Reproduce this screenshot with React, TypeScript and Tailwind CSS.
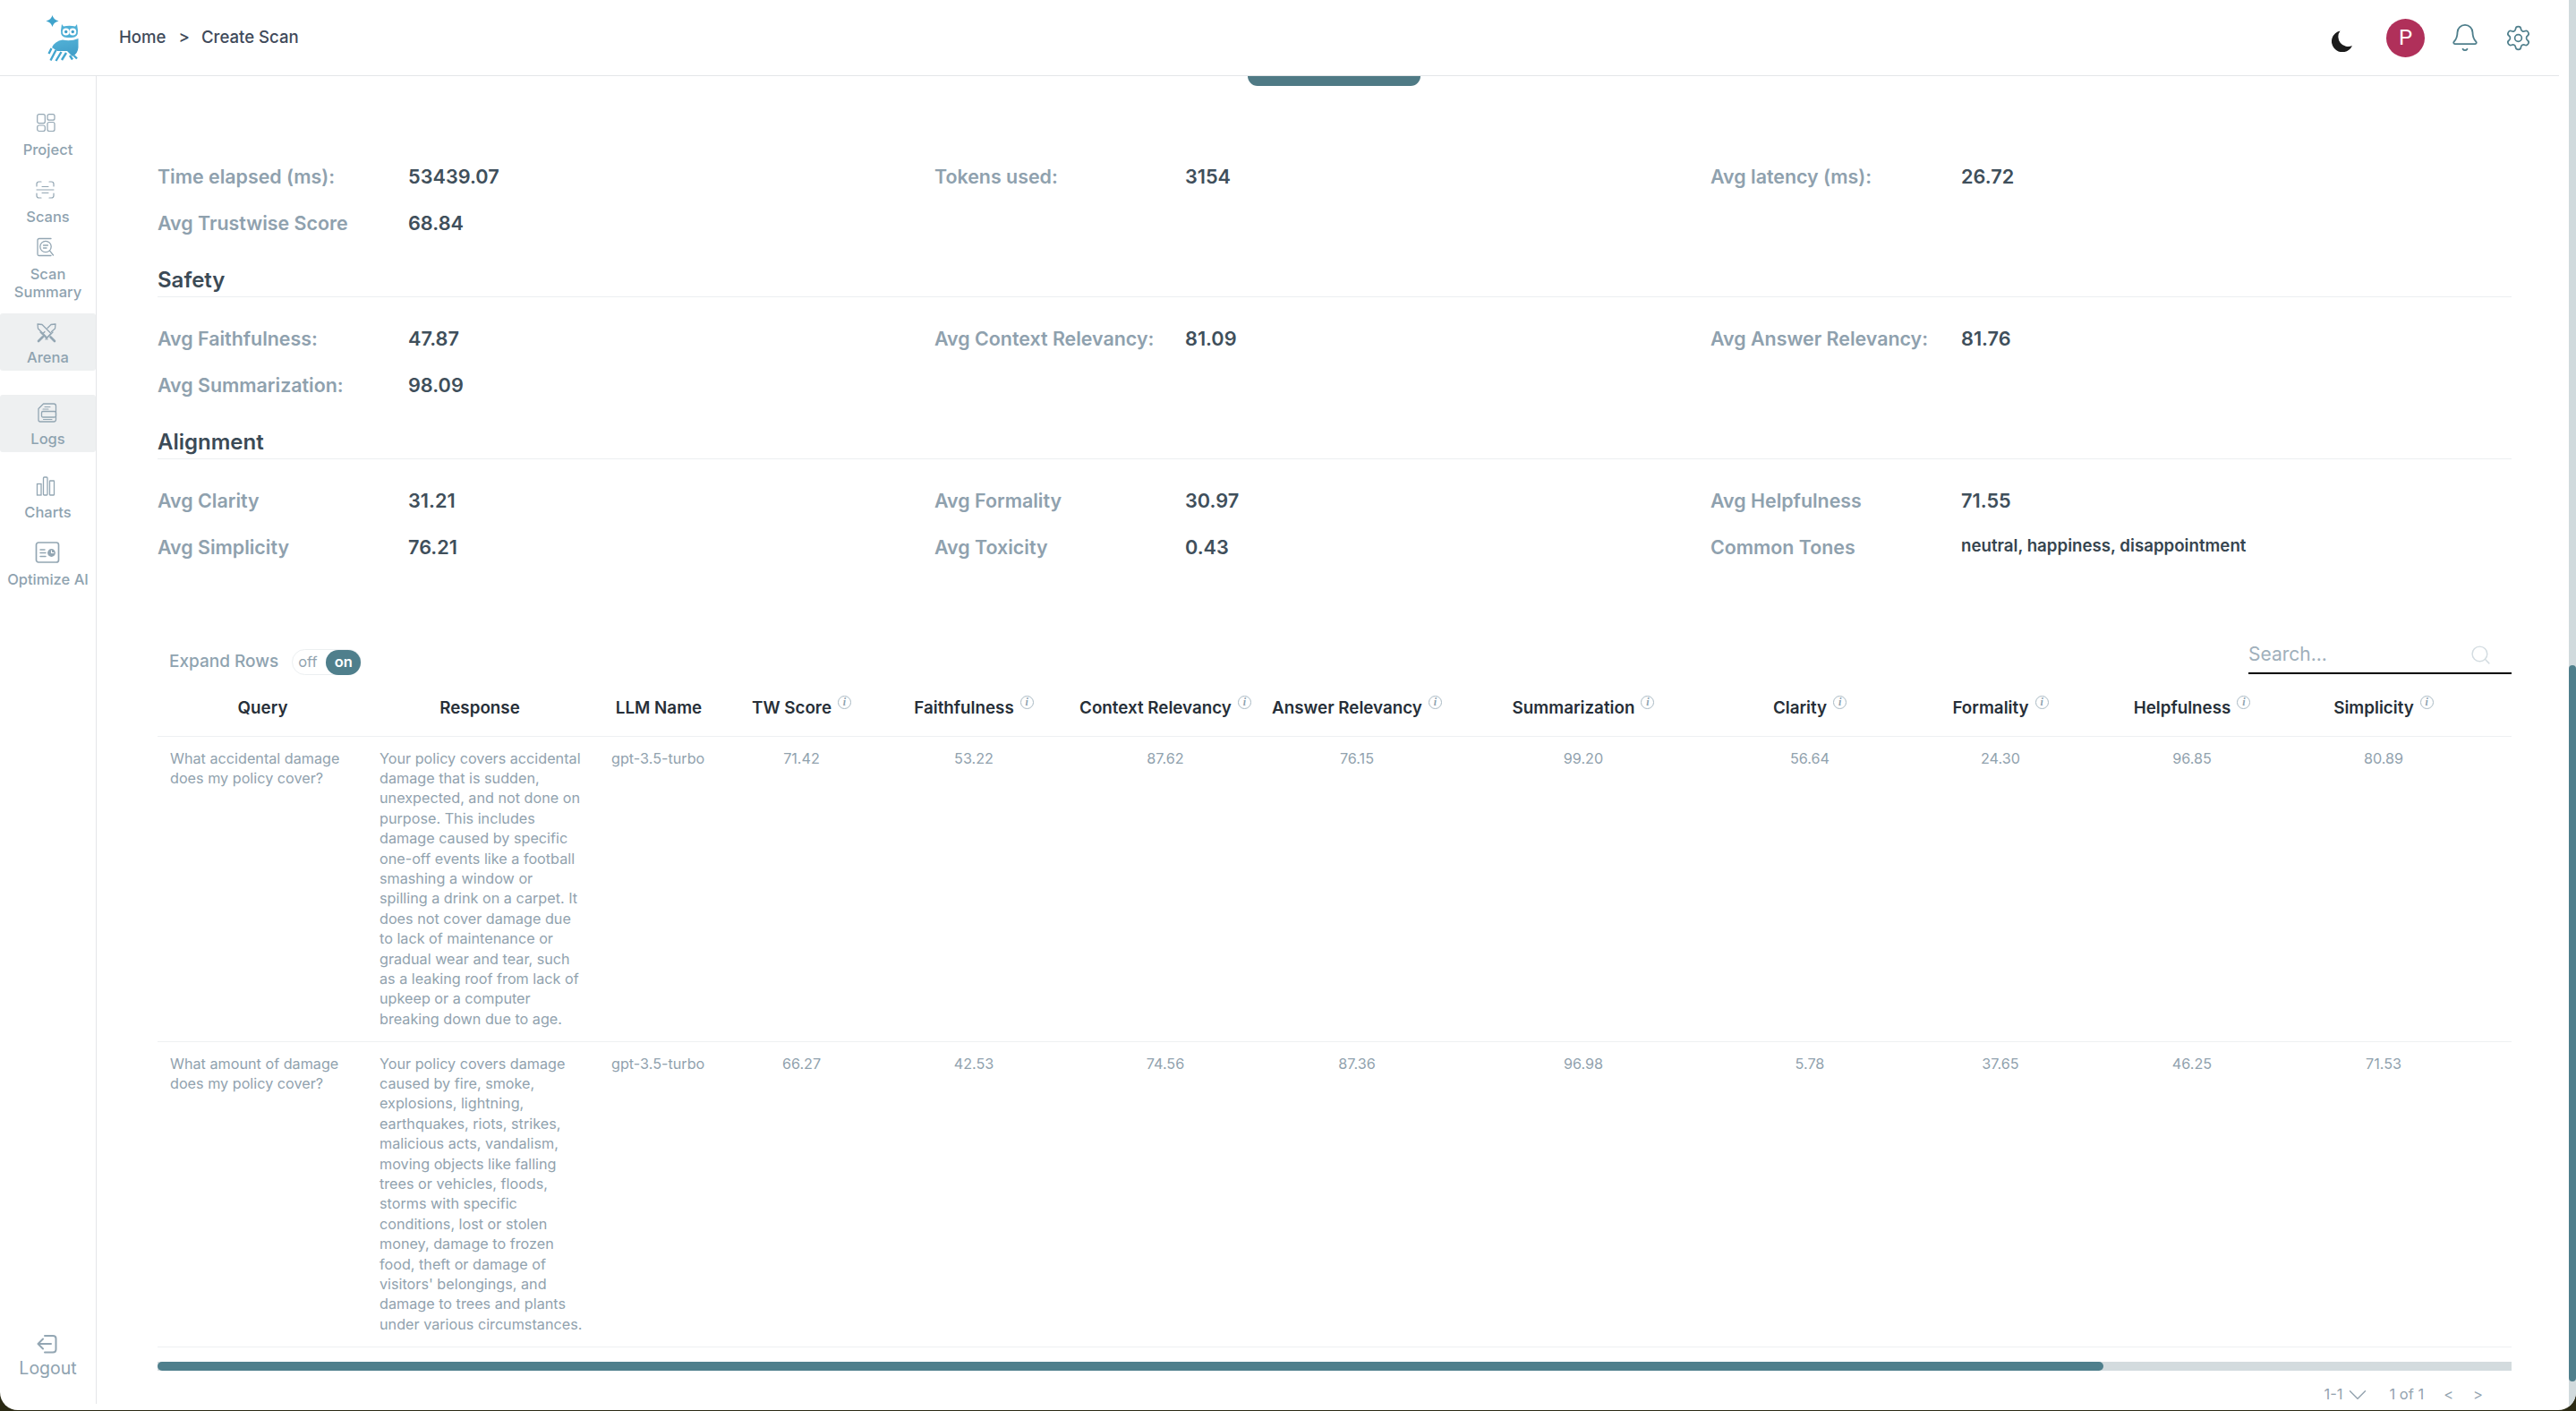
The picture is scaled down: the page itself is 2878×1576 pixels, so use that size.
import React from "react";
import { Bell, Settings, Search, ChevronDown } from "lucide-react";

const stroke = "#93a6b3";

function ProjectIcon() {
  return (
    <svg width="26" height="22" viewBox="0 0 26 22" fill="none" stroke={stroke} strokeWidth="1.2" className="-ml-[6px]">
      <rect x="3.7" y="1.7" width="8.6" height="10" rx="2" />
      <rect x="15" y="1.7" width="8" height="6.5" rx="2" />
      <rect x="3.7" y="14" width="8.6" height="6.5" rx="2" />
      <rect x="15" y="10.5" width="8" height="10" rx="2" />
    </svg>
  );
}
function ScansIcon() {
  return (
    <svg width="26" height="22" viewBox="0 0 26 22" fill="none" stroke={stroke} strokeWidth="1.2" strokeLinecap="round" className="-ml-[8px]">
      <path d="M4 7 V4.5 Q4 2 6.5 2 H9 M18 2 H20.5 Q23 2 23 4.5 V7 M4 15 V17.5 Q4 20 6.5 20 H9 M18 20 H20.5 Q23 20 23 17.5 V15" />
      <path d="M10 7.5 H17 M4 11 H23 M10 14.5 H17" strokeWidth="1" />
    </svg>
  );
}
function SummaryIcon() {
  return (
    <svg width="26" height="22" viewBox="0 0 26 22" fill="none" stroke={stroke} strokeWidth="1.3" strokeLinecap="round" className="-ml-[8px]">
      <path d="M20 1.5 H7 Q5 1.5 5 3.5 V19 Q5 20.5 6.5 20.5 H20" />
      <circle cx="14" cy="10.5" r="6.2" />
      <path d="M18.6 15.2 L22.5 20 M11.5 9 H16.5 M11.5 12 H15" />
    </svg>
  );
}
function ArenaIcon() {
  return (
    <svg width="24" height="24" viewBox="0 0 24 24" fill="none" stroke={stroke} strokeWidth="1.3" strokeLinecap="round" strokeLinejoin="round" className="-ml-[3px]">
      <path d="M2 2 L7 2.5 L17 12.5 L12.5 17 L2.5 7 Z" />
      <path d="M22 2 L17 2.5 L13 6.5 M22 2 L21.5 7 L17.5 10.5" />
      <path d="M10 10.5 L7.5 13 M9.5 15 L7 17.5" />
      <path d="M5 11 L13 19 M19 11 L11 19" />
      <path d="M16.5 16.5 L21 21 M7.5 16.5 L3 21" strokeWidth="2.6" />
    </svg>
  );
}
function LogsIcon() {
  return (
    <svg width="26" height="24" viewBox="0 0 26 24" fill="none" stroke={stroke} strokeWidth="1.3" strokeLinecap="round" strokeLinejoin="round" className="-ml-[4px]">
      <path d="M4 20 V7.5 L9.5 2 H21 Q23.5 2 23.5 4.5 V19.5 Q23.5 22 21 22 H6 Q4 22 4 20 Z" />
      <rect x="7.5" y="10.5" width="16" height="6.5" rx="1.5" />
      <path d="M11 5.5 H17 M9 8 H15 M9.5 19.5 H19" strokeWidth="1.1" />
    </svg>
  );
}
function ChartsIcon() {
  return (
    <svg width="26" height="22" viewBox="0 0 26 22" fill="none" stroke={stroke} strokeWidth="1.3" className="-ml-[5px]">
      <rect x="3.5" y="8.5" width="4.5" height="12.5" />
      <rect x="10.5" y="1" width="4.5" height="20" rx="1" />
      <rect x="17.5" y="5" width="5" height="16" rx="0.5" />
    </svg>
  );
}
function OptimizeIcon() {
  return (
    <svg width="28" height="24" viewBox="0 0 28 24" fill="none" stroke={stroke} strokeWidth="1.7" strokeLinecap="round" className="-ml-[1px]">
      <rect x="1.5" y="1" width="25" height="22" rx="2.5" />
      <path d="M6 9 H11 M6 12.5 H12 M6 16.5 H12" strokeWidth="1.5" />
      <circle cx="18.5" cy="12.5" r="4.4" fill={stroke} stroke="none" />
      <path d="M18.5 10 V12.5 H21" stroke="#ffffff" strokeWidth="1.1" />
    </svg>
  );
}
function LogoutIcon() {
  return (
    <svg width="24" height="22" viewBox="0 0 24 22" fill="none" stroke={stroke} strokeWidth="2" strokeLinecap="round" strokeLinejoin="round" className="-ml-[2px]">
      <path d="M9 2 H18 Q21.5 2 21.5 5 V17 Q21.5 20.5 18 20.5 H9" />
      <path d="M16 11 H2 M7 5.5 L1.5 11 L7 16.5" />
    </svg>
  );
}
function Logo() {
  return (
    <svg width="60" height="64" viewBox="0 0 60 64" className="ml-[40px]">
      <defs>
        <linearGradient id="owl" x1="0" y1="0" x2="0.3" y2="1">
          <stop offset="0" stopColor="#54b3d8" />
          <stop offset="1" stopColor="#429fc9" />
        </linearGradient>
      </defs>
      <path d="M18.5 7 Q19.8 12.2 25.5 13.5 Q19.8 14.8 18.5 20 Q17.2 14.8 11.5 13.5 Q17.2 12.2 18.5 7 Z" fill="#3fa3cc" />
      <path d="M29 17 L31 19.5 Q37.5 18 44 19.5 L46 17 L47 24 Q47.5 32 40 32 H35 Q27.5 32 28 24 Z" fill="#4fb0d6" />
      <circle cx="33.7" cy="25.5" r="3.9" fill="#ffffff" />
      <circle cx="41.3" cy="25.5" r="3.9" fill="#ffffff" />
      <circle cx="33.7" cy="25.5" r="1.7" fill="#3f9fc9" />
      <circle cx="41.3" cy="25.5" r="1.7" fill="#3f9fc9" />
      <path d="M30 34.5 Q39 36.5 47.5 33 V43 Q47 50 41 53 L35 47 H24 L18 43 Q21 36 30 34.5 Z" fill="url(#owl)" />
      <path d="M17.5 44 L14.5 50 M22.5 46 L16.5 57.5 M28.5 48 L22.5 58 M34 49 L29 57 M38 52 L41 56.5 M42.5 52 L46 55.5" stroke="#43a6cf" strokeWidth="2.4" fill="none" />
    </svg>
  );
}
function Moon() {
  return (
    <svg width="24" height="24" viewBox="0 0 24 24">
      <path d="M9.5 0.5 A12 12 0 1 0 23 17 A11 11 0 0 1 9.5 0.5 Z" fill="#1b1b1b" />
    </svg>
  );
}
function Info() {
  return (
    <span className="relative -top-[7px] ml-[7px] inline-flex h-[15px] w-[15px] shrink-0 items-center justify-center rounded-full border border-[#a9b9c3] text-[12px] leading-none text-[#8fa3b0] italic [font-family:'Liberation_Serif',serif]">
      i
    </span>
  );
}

const navCls = "flex flex-col items-center text-[16.5px] font-medium text-[#8fa3b0]";

type Pair = [string, string];

function StatRow({ items, last }: { items: Pair[]; last?: boolean }) {
  return (
    <div className="grid h-[52px] grid-cols-[868px_867px_1fr] items-center">
      {items.map(([k, v], i) => (
        <div key={k} className="flex items-center">
          <div className="w-[280px] shrink-0 text-[21.4px] font-semibold text-[#8fa1ae]">{k}</div>
          <div className={last && i === 2 ? "-mt-[2px] text-[18.7px] font-semibold text-[#36454f]" : "text-[21.7px] font-semibold text-[#3f4f5b]"}>{v}</div>
        </div>
      ))}
    </div>
  );
}

function Heading({ children }: { children: React.ReactNode }) {
  return (
    <div className="mb-[20px] flex h-[57px] items-end border-b border-[#eceff1] pb-[3px] text-[24px] leading-[30px] font-semibold text-[#3b4a56]">
      {children}
    </div>
  );
}

const cols = [
  { name: "Query", w: 235 },
  { name: "Response", w: 250 },
  { name: "LLM Name", w: 150 },
  { name: "TW Score", w: 169, info: true },
  { name: "Faithfulness", w: 216, info: true },
  { name: "Context Relevancy", w: 212, info: true },
  { name: "Answer Relevancy", w: 216, info: true },
  { name: "Summarization", w: 290, info: true },
  { name: "Clarity", w: 216, info: true },
  { name: "Formality", w: 210, info: true },
  { name: "Helpfulness", w: 218, info: true },
  { name: "Simplicity", w: 210, info: true },
];

const rows = [
  {
    q: ["What accidental damage", "does my policy cover?"],
    r: [
      "Your policy covers accidental",
      "damage that is sudden,",
      "unexpected, and not done on",
      "purpose. This includes",
      "damage caused by specific",
      "one-off events like a football",
      "smashing a window or",
      "spilling a drink on a carpet. It",
      "does not cover damage due",
      "to lack of maintenance or",
      "gradual wear and tear, such",
      "as a leaking roof from lack of",
      "upkeep or a computer",
      "breaking down due to age.",
    ],
    nums: ["71.42", "53.22", "87.62", "76.15", "99.20", "56.64", "24.30", "96.85", "80.89"],
  },
  {
    q: ["What amount of damage", "does my policy cover?"],
    r: [
      "Your policy covers damage",
      "caused by fire, smoke,",
      "explosions, lightning,",
      "earthquakes, riots, strikes,",
      "malicious acts, vandalism,",
      "moving objects like falling",
      "trees or vehicles, floods,",
      "storms with specific",
      "conditions, lost or stolen",
      "money, damage to frozen",
      "food, theft or damage of",
      "visitors' belongings, and",
      "damage to trees and plants",
      "under various circumstances.",
    ],
    nums: ["66.27", "42.53", "74.56", "87.36", "96.98", "5.78", "37.65", "46.25", "71.53"],
  },
];

export default function App() {
  return (
    <div className="h-[1576px] w-full overflow-hidden bg-[#2b2a14] [font-family:Inter,sans-serif]">
      <div className="flex h-[1575px] overflow-hidden rounded-b-[20px] bg-white">
        <div className="flex min-w-0 flex-1 flex-col">
          <header className="mr-[11px] flex h-[85px] shrink-0 items-center border-b border-[#e4e6e8]">
            <Logo />
            <div className="-mt-[1px] ml-[33px] flex items-center text-[18.6px] font-medium text-[#3f4a5a]">
              <span>Home</span>
              <span className="ml-[14px]">&gt;</span>
              <span className="ml-[13px]">Create Scan</span>
            </div>
            <div className="ml-auto flex items-center">
              <div className="mt-[7px]"><Moon /></div>
              <div className="ml-[37px] flex h-[43px] w-[43px] items-center justify-center rounded-full bg-[#b0305a] text-[24px] text-white [font-family:Roboto,sans-serif]">P</div>
              <Bell size={34} strokeWidth={1.3} color="#4f7f8c" className="ml-[28px]" />
              <Settings size={31} strokeWidth={1.3} color="#4f7f8c" className="mr-[30px] ml-[27px]" />
            </div>
          </header>
          <div className="flex min-h-0 flex-1">
            <aside className="mb-[7px] flex w-[108px] shrink-0 flex-col border-r border-[#e4e6e8]">
              <div className={`${navCls} mt-[41px] gap-[8px]`}><ProjectIcon /><span className="leading-[22px]">Project</span></div>
              <div className={`${navCls} mt-[23px] gap-[8px]`}><ScansIcon /><span className="leading-[22px]">Scans</span></div>
              <div className={`${navCls} mt-[12px] gap-[9px]`}><SummaryIcon /><span className="text-center leading-[20px]">Scan<br />Summary</span></div>
              <div className={`${navCls} mt-[14px] h-[64px] gap-[4px] rounded-[3px] bg-[#eef0f1] pt-[10px]`}><ArenaIcon /><span className="leading-[22px]">Arena</span></div>
              <div className={`${navCls} mt-[27px] h-[64px] gap-[6px] rounded-[3px] bg-[#eef0f1] pt-[8px]`}><LogsIcon /><span className="leading-[22px]">Logs</span></div>
              <div className={`${navCls} mt-[27px] gap-[7px]`}><ChartsIcon /><span className="leading-[22px]">Charts</span></div>
              <div className={`${navCls} mt-[22px] gap-[7px]`}><OptimizeIcon /><span className="leading-[22px]">Optimize AI</span></div>
              <div className={`${navCls} mt-auto gap-[5px] pb-[29px] !text-[19.5px] !font-normal`}><LogoutIcon /><span className="leading-[22px]">Logout</span></div>
            </aside>
            <main className="min-w-0 flex-1 overflow-hidden pr-[64px] pl-[68px]">
              <div className="ml-[1218px] h-[11px] w-[193px] rounded-b-[12px] bg-[#4f7a85]" />
              <div className="mt-[75px]">
                <StatRow items={[["Time elapsed (ms):", "53439.07"], ["Tokens used:", "3154"], ["Avg latency (ms):", "26.72"]]} />
                <StatRow items={[["Avg Trustwise Score", "68.84"]]} />
              </div>
              <Heading>Safety</Heading>
              <StatRow items={[["Avg Faithfulness:", "47.87"], ["Avg Context Relevancy:", "81.09"], ["Avg Answer Relevancy:", "81.76"]]} />
              <StatRow items={[["Avg Summarization:", "98.09"]]} />
              <Heading>Alignment</Heading>
              <StatRow items={[["Avg Clarity", "31.21"], ["Avg Formality", "30.97"], ["Avg Helpfulness", "71.55"]]} />
              <StatRow last items={[["Avg Simplicity", "76.21"], ["Avg Toxicity", "0.43"], ["Common Tones", "neutral, happiness, disappointment"]]} />

              <div className="mt-[74px] flex h-[43px] items-end justify-between">
                <div className="ml-[13px] flex items-center">
                  <span className="text-[19px] font-medium text-[#8fa3b0]">Expand Rows</span>
                  <div className="ml-[15px] flex h-[29px] w-[78px] items-center justify-between rounded-full border border-[#eceff1] text-[16.5px]">
                    <span className="ml-[6px] text-[#93a4b0]">off</span>
                    <span className="flex h-[28px] w-[39px] items-center justify-center rounded-full bg-[#4f7f8c] font-semibold text-white">on</span>
                  </div>
                </div>
                <div className="mb-[1px] flex h-[42px] w-[294px] items-center justify-between border-b-2 border-black">
                  <span className="text-[21px] text-[#a0b0bb]">Search...</span>
                  <Search size={25} strokeWidth={1.4} color="#d3dce1" className="mr-[22px]" />
                </div>
              </div>

              <div className="overflow-hidden">
                <table className="w-[2630px] table-fixed border-collapse">
                  <colgroup>
                    {cols.map((c) => <col key={c.name} style={{ width: c.w }} />)}
                    <col style={{ width: 38 }} />
                  </colgroup>
                  <thead>
                    <tr className="h-[68px] border-b border-[#eef0f2]">
                      {cols.map((c) => (
                        <th key={c.name} className="p-0 pt-[7px] text-center text-[18.8px] font-semibold whitespace-nowrap text-[#272f38]">
                          <span className="inline-flex items-center justify-center">{c.name}{c.info ? <Info /> : null}</span>
                        </th>
                      ))}
                      <th className="p-0" />
                    </tr>
                  </thead>
                  <tbody>
                    {rows.map((r) => (
                      <tr key={r.q[0]} className="h-[341px] border-b border-[#eef0f2] align-top text-[16.2px] leading-[22.4px] text-[#91a2ae]">
                        <td className="py-[13px] pr-[10px] pl-[14px] whitespace-nowrap">
                          {r.q.map((l) => <div key={l}>{l}</div>)}
                        </td>
                        <td className="py-[13px] pr-[4px] pl-[13px] whitespace-nowrap">
                          {r.r.map((l) => <div key={l}>{l}</div>)}
                        </td>
                        <td className="py-[13px] pl-[22px]">gpt-3.5-turbo</td>
                        {r.nums.map((n, i) => (
                          <td key={i} className="py-[13px] text-center">{n}</td>
                        ))}
                        <td />
                      </tr>
                    ))}
                  </tbody>
                </table>
              </div>

              <div className="mt-[16px] h-[10px] bg-[#d3dbde]">
                <div className="h-full w-[2174px] rounded-[5px] bg-[#4f7f8c]" />
              </div>

              <div className="mt-[15px] flex h-[24px] items-center justify-end text-[16.5px] text-[#94a3af]">
                <span>1-1</span>
                <ChevronDown size={34} strokeWidth={1} color="#94a3af" className="-my-[5px]" />
                <span className="ml-[18px]">1 of 1</span>
                <span className="ml-[22px]">&lt;</span>
                <span className="mr-[32px] ml-[22px]">&gt;</span>
              </div>
            </main>
          </div>
        </div>
        <div className="flex h-full w-[8px] shrink-0 flex-col bg-[#d1dadd]">
          <div className="mt-[743px] h-[800px] rounded-[5px] bg-[#4f7f8c]" />
        </div>
      </div>
    </div>
  );
}
